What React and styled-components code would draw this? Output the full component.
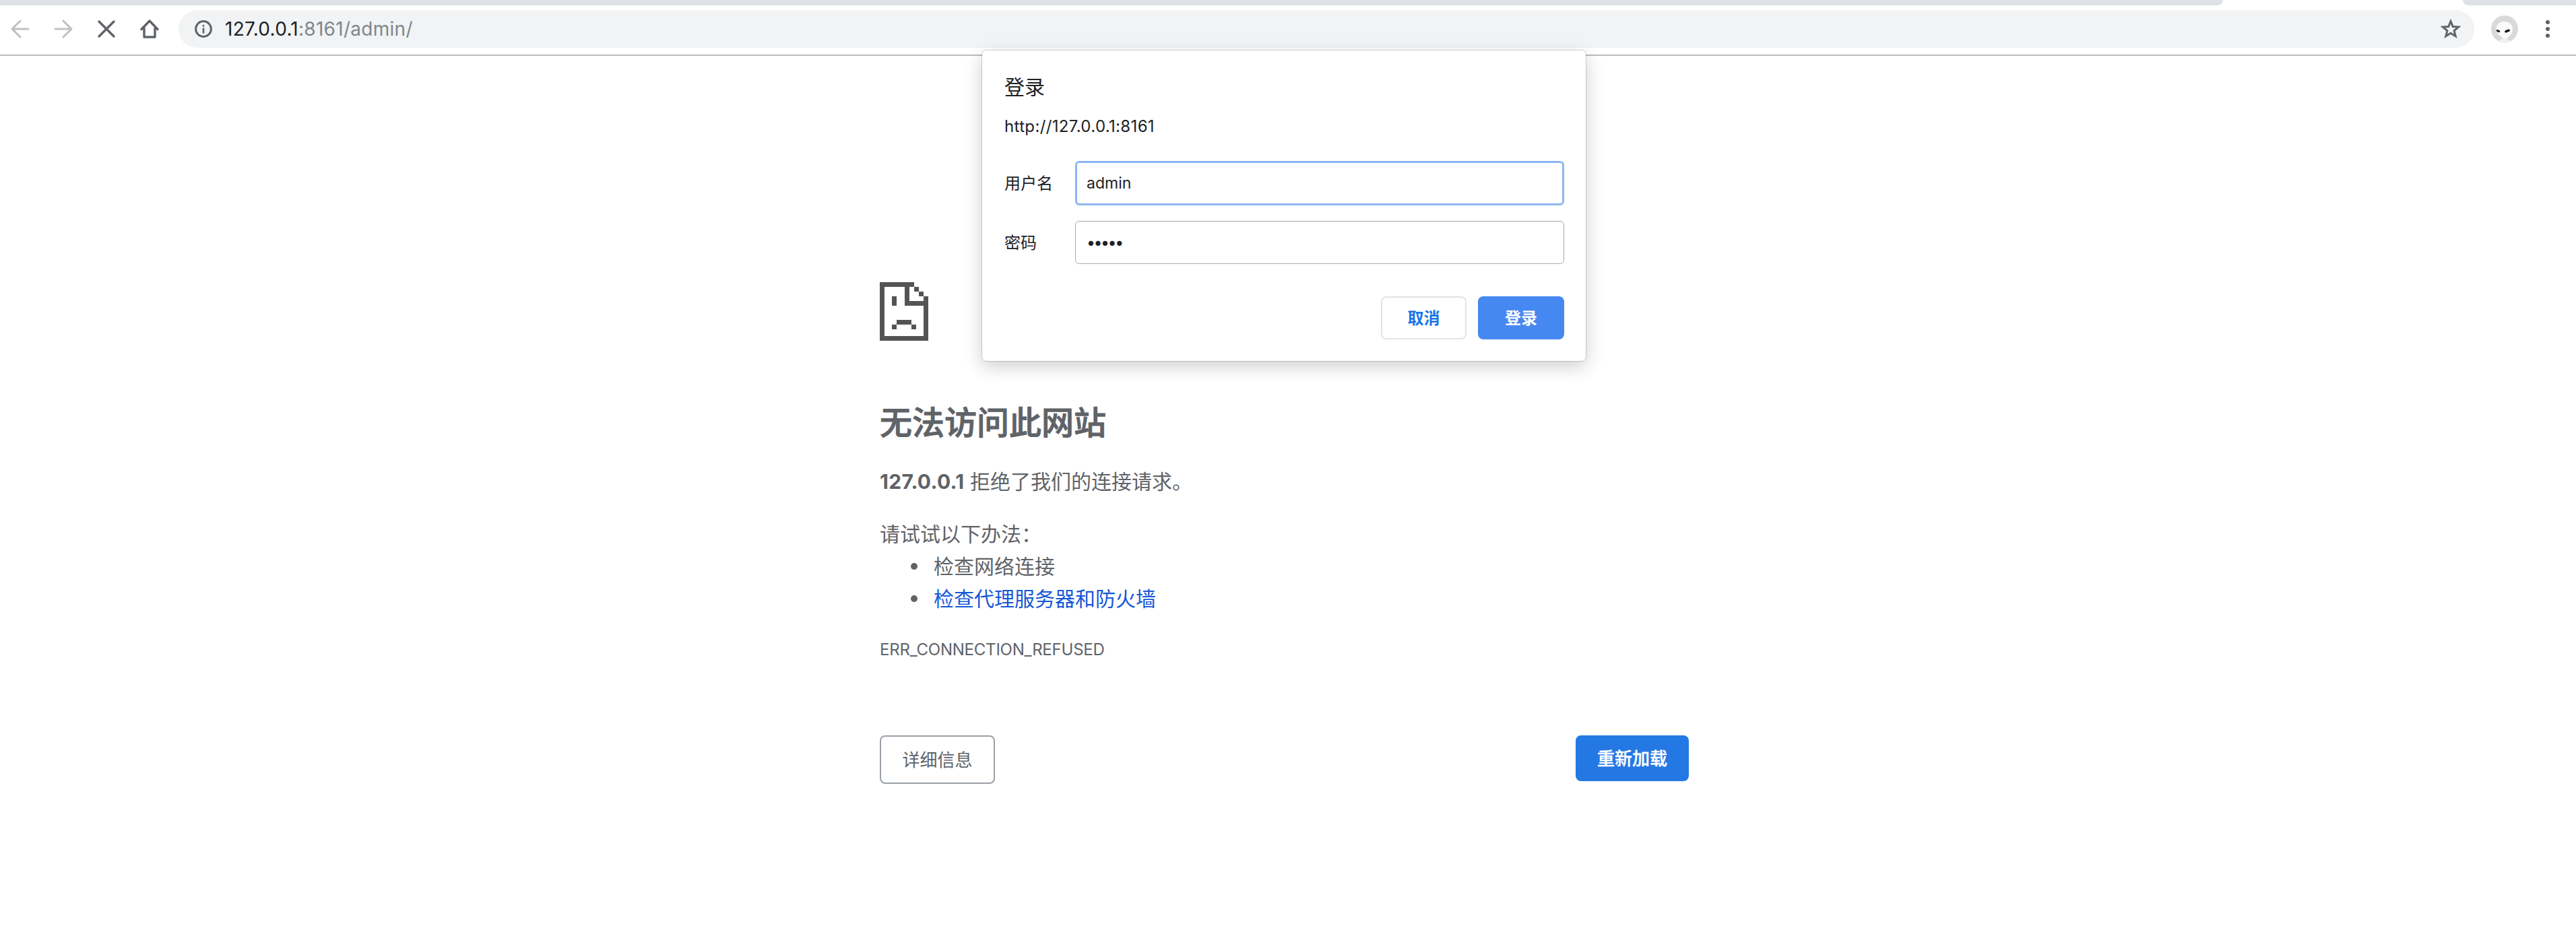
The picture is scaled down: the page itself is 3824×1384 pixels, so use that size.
import styled, { createGlobalStyle } from "styled-components";

const fontStack = `Inter, "Noto Sans CJK SC", sans-serif`;

const GlobalStyle = createGlobalStyle`
  html, body {
    margin: 0;
    background: #fff;
    overflow: hidden;
  }
  * {
    box-sizing: border-box;
  }
`;

const Page = styled.div`
  position: relative;
  width: 3824px;
  height: 1384px;
  font-family: ${fontStack};
  color: #5f6368;
  overflow: hidden;
`;

/* browser chrome */
const TabStrip = styled.div`
  display: flex;
  justify-content: space-between;
  height: 8px;
`;

const TabEdge = styled.div`
  height: 8px;
  width: ${({ $width }) => $width}px;
  background: #dee1e6;
  border-radius: ${({ $side }) => ($side === "left" ? "0 0 12px 0" : "0 0 0 12px")};
`;

const Toolbar = styled.div`
  display: flex;
  align-items: center;
  height: 75px;
  padding: 8px 0 11px;
  border-bottom: 2px solid #bcbcbc;
`;

const NavGroup = styled.div`
  display: flex;
  gap: 4px;
`;

const NavButton = styled.div`
  display: flex;
  align-items: center;
  justify-content: center;
  width: 60px;
  height: 56px;
`;

const Omnibox = styled.div`
  display: flex;
  align-items: center;
  width: 3408px;
  height: 56px;
  margin-left: 13px;
  padding: 0 20px 0 24px;
  background: #f1f3f4;
  border-radius: 28px;
`;

const UrlText = styled.div`
  flex: 1;
  margin-left: 19px;
  font-size: 28px;
  letter-spacing: 0.28px;
  color: #80868b;
  white-space: nowrap;
`;

const UrlHost = styled.span`
  color: #202124;
`;

const Avatar = styled.div`
  width: 40px;
  height: 40px;
  margin-left: 25px;
`;

const MenuDots = styled.div`
  display: flex;
  flex-direction: column;
  gap: 4px;
  margin-left: 41px;
`;

const Dot = styled.span`
  width: 6px;
  height: 6px;
  border-radius: 50%;
  background: #5f6368;
`;

/* error page */
const ErrorContent = styled.main`
  width: 1201px;
  margin-left: 1306px;
  padding-top: 336px;
`;

const SadFile = styled.svg`
  display: block;
  width: 72px;
  height: 87px;
`;

const Heading = styled.h1`
  margin: 97px 0 0;
  font-size: 48px;
  font-weight: 500;
  line-height: 50px;
  color: #5f6368;
  -webkit-text-stroke: 1px #5f6368;
`;

const Summary = styled.p`
  margin: 42px 0 0;
  font-size: 30px;
  line-height: 40px;
`;

const Strong = styled.strong`
  font-weight: 700;
  letter-spacing: 0.3px;
`;

const Suggestions = styled.div`
  margin-top: 34px;
  font-size: 30px;
  line-height: 48px;
`;

const SuggestionList = styled.ul`
  margin: 0;
  padding: 0 0 0 46px;
  list-style: none;
`;

const SuggestionItem = styled.li`
  display: flex;
  align-items: center;
  &::before {
    content: "";
    width: 10px;
    height: 10px;
    margin-right: 24px;
    border-radius: 50%;
    background: #5f6368;
  }
`;

const SuggestionLink = styled.a`
  color: #1558d6;
  text-decoration: none;
`;

const ErrorCode = styled.div`
  margin-top: 36px;
  font-size: 24px;
  line-height: 32px;
  letter-spacing: -0.22px;
  color: #5f6368;
`;

const ButtonRow = styled.div`
  display: flex;
  justify-content: space-between;
  align-items: flex-start;
  margin-top: 111px;
`;

const DetailsButton = styled.button`
  width: 171px;
  height: 72px;
  padding: 0 0 3px;
  background: #fff;
  border: 2px solid #9aa0a6;
  border-radius: 8px;
  font: 400 26px ${fontStack};
  color: #5f6368;
`;

const ReloadButton = styled.button`
  width: 168px;
  height: 68px;
  padding: 0 0 3px;
  background: #2478e4;
  border: 0;
  border-radius: 8px;
  font: 500 26px ${fontStack};
  color: #fff;
  -webkit-text-stroke: 0.4px #fff;
`;

/* basic auth dialog */
const AuthDialog = styled.form`
  position: absolute;
  left: 1458px;
  top: 75px;
  width: 896px;
  height: 461px;
  padding: 0 32px 0 33px;
  background: #fff;
  border-radius: 6px;
  box-shadow: 0 0 0 1px rgba(0, 0, 0, 0.14), 0 8px 28px rgba(0, 0, 0, 0.2);
`;

const DialogTitle = styled.div`
  padding-top: 34px;
  font-size: 30px;
  line-height: 40px;
  color: #202124;
`;

const DialogOrigin = styled.div`
  margin-top: 24px;
  font-size: 24px;
  line-height: 30px;
  letter-spacing: 0.35px;
  color: #202124;
`;

const FieldRow = styled.label`
  display: grid;
  grid-template-columns: 105px 1fr;
  align-items: center;
  margin-top: ${({ $top }) => $top}px;
  font-size: 24px;
  color: #202124;
`;

const FieldLabel = styled.span`
  padding-bottom: 4px;
`;

const FieldInput = styled.input`
  width: 100%;
  height: ${({ $focused }) => ($focused ? 66 : 64)}px;
  padding: 0 ${({ $focused }) => ($focused ? 14 : 16)}px;
  background: #fff;
  border: ${({ $focused }) => ($focused ? "3px solid #8fb6f2" : "1px solid #aaa")};
  border-radius: 6px;
  outline: none;
  font: 400 23px ${fontStack};
  letter-spacing: ${({ type }) => (type === "password" ? "-2.4px" : "0")};
  color: #202124;
`;

const DialogActions = styled.div`
  display: flex;
  justify-content: flex-end;
  gap: 17px;
  margin-top: 48px;
`;

const CancelButton = styled.button`
  width: 127px;
  height: 64px;
  padding: 0 0 3px;
  background: #fff;
  border: 2px solid #e3e4e6;
  border-radius: 8px;
  font: 700 24px ${fontStack};
  color: #1a73e8;
`;

const SubmitButton = styled.button`
  width: 128px;
  height: 64px;
  padding: 0 0 3px;
  background: #4688f1;
  border: 0;
  border-radius: 8px;
  font: 700 24px ${fontStack};
  color: #fff;
`;

const ArrowIcon = ({ flip }) => (
  <svg width="28" height="28" viewBox="0 0 28 28" fill="none" stroke="#bfc0c1" strokeWidth="3" strokeLinecap="round" strokeLinejoin="round">
    <path d={flip ? "M2 14h24M14 2l12 12-12 12" : "M26 14H2M14 2L2 14l12 12"} />
  </svg>
);

const StopIcon = () => (
  <svg width="28" height="28" viewBox="0 0 28 28" fill="none" stroke="#5f6368" strokeWidth="3.4" strokeLinecap="round">
    <path d="M3 3l22 22M25 3L3 25" />
  </svg>
);

const HomeIcon = () => (
  <svg width="28" height="28" viewBox="0 0 28 28" fill="none" stroke="#5f6368" strokeWidth="3.4" strokeLinecap="round" strokeLinejoin="round">
    <path d="M2 14.5L14 2l12 12.5M6 13v13h16V13" />
  </svg>
);

const InfoIcon = () => (
  <svg width="26" height="26" viewBox="0 0 26 26" fill="none" style={{ flexShrink: 0 }}>
    <circle cx="13" cy="13" r="11.4" stroke="#5f6368" strokeWidth="3" />
    <rect x="11.7" y="11.5" width="2.6" height="8" fill="#5f6368" />
    <rect x="11.7" y="6.8" width="2.6" height="2.8" fill="#5f6368" />
  </svg>
);

const StarIcon = () => (
  <svg width="30" height="30" viewBox="0 0 30 30" fill="none" stroke="#5f6368" strokeWidth="3" strokeLinejoin="miter">
    <path d="M15 3.6l3.2 7.9 8.4.6-6.5 5.4 2.1 8.2-7.2-4.5-7.2 4.5 2.1-8.2-6.5-5.4 8.4-.6z" />
  </svg>
);

const AlienAvatar = () => (
  <svg width="40" height="40" viewBox="0 0 40 40">
    <defs>
      <clipPath id="avatar-clip">
        <circle cx="20" cy="20" r="20" />
      </clipPath>
    </defs>
    <g clipPath="url(#avatar-clip)">
      <rect width="40" height="40" fill="#d9d9d9" />
      <path d="M7 40l9-6h8l9 6z" fill="#f1f1f1" stroke="#c9c9c9" strokeWidth="0.6" />
      <path d="M19.5 9c7 0 12.5 4 12.5 11 0 6-5.500 13-11 15-1.500.4-3-.6-5-2.200C11 29 7.500 24.500 7.500 20c0-6.500 5-11 12-11z" fill="#fbfbfb" />
      <ellipse cx="10.500" cy="23" rx="3" ry="1.700" transform="rotate(25 10.500 23)" fill="#1d1d1d" />
      <ellipse cx="24" cy="23" rx="4.200" ry="2" transform="rotate(-22 24 23)" fill="#1d1d1d" />
    </g>
  </svg>
);

const App = () => (
  <Page>
    <GlobalStyle />
    <TabStrip>
      <TabEdge $width={3300} $side="left" />
      <TabEdge $width={168} $side="right" />
    </TabStrip>
    <Toolbar>
      <NavGroup>
        <NavButton><ArrowIcon /></NavButton>
        <NavButton><ArrowIcon flip /></NavButton>
        <NavButton><StopIcon /></NavButton>
        <NavButton><HomeIcon /></NavButton>
      </NavGroup>
      <Omnibox>
        <InfoIcon />
        <UrlText><UrlHost>127.0.0.1</UrlHost>:8161/admin/</UrlText>
        <StarIcon />
      </Omnibox>
      <Avatar><AlienAvatar /></Avatar>
      <MenuDots><Dot /><Dot /><Dot /></MenuDots>
    </Toolbar>

    <ErrorContent>
      <SadFile viewBox="0 0 72 87" shapeRendering="crispEdges" fill="#545454">
        <rect x="0" y="0" width="51" height="7" />
        <rect x="0" y="0" width="7" height="87" />
        <rect x="0" y="80" width="72" height="7" />
        <rect x="65" y="21" width="7" height="66" />
        <rect x="37" y="7" width="7" height="28" />
        <rect x="37" y="28" width="28" height="7" />
        <rect x="51" y="7" width="7" height="7" />
        <rect x="58" y="14" width="7" height="7" />
        <rect x="18" y="21" width="7" height="14" />
        <rect x="25" y="56" width="22" height="7" />
        <rect x="18" y="63" width="7" height="7" />
        <rect x="47" y="63" width="7" height="7" />
      </SadFile>
      <Heading>无法访问此网站</Heading>
      <Summary><Strong>127.0.0.1</Strong> 拒绝了我们的连接请求。</Summary>
      <Suggestions>
        请试试以下办法：
        <SuggestionList>
          <SuggestionItem>检查网络连接</SuggestionItem>
          <SuggestionItem><SuggestionLink href="#">检查代理服务器和防火墙</SuggestionLink></SuggestionItem>
        </SuggestionList>
      </Suggestions>
      <ErrorCode>ERR_CONNECTION_REFUSED</ErrorCode>
      <ButtonRow>
        <DetailsButton type="button">详细信息</DetailsButton>
        <ReloadButton type="button">重新加载</ReloadButton>
      </ButtonRow>
    </ErrorContent>

    <AuthDialog>
      <DialogTitle>登录</DialogTitle>
      <DialogOrigin>http://127.0.0.1:8161</DialogOrigin>
      <FieldRow $top={36}>
        <FieldLabel>用户名</FieldLabel>
        <FieldInput $focused defaultValue="admin" readOnly />
      </FieldRow>
      <FieldRow $top={23}>
        <FieldLabel>密码</FieldLabel>
        <FieldInput type="password" defaultValue="admin" readOnly />
      </FieldRow>
      <DialogActions>
        <CancelButton type="button">取消</CancelButton>
        <SubmitButton type="button">登录</SubmitButton>
      </DialogActions>
    </AuthDialog>
  </Page>
);

export default App;
